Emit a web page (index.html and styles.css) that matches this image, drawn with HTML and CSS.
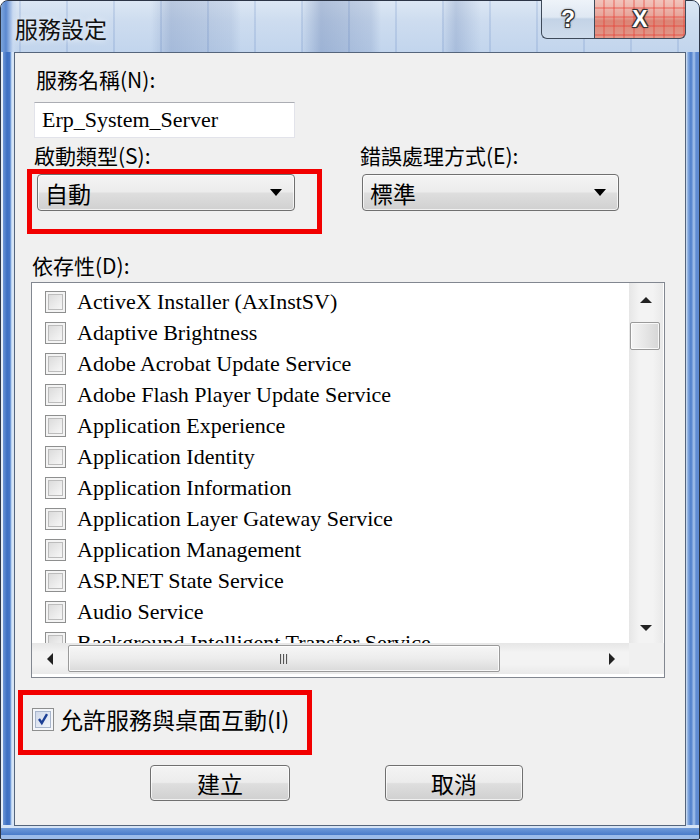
FILE: index.html
```html
<!DOCTYPE html>
<html lang="zh-Hant">
<head>
<meta charset="utf-8">
<title>服務設定</title>
<link rel="stylesheet" href="styles.css">
</head>
<body>
<div class="window">
  <div class="titlebar">
    <span class="title">服務設定</span>
    <div class="caption-btns">
      <div class="cbtn help">?</div>
      <div class="cbtn close">X</div>
    </div>
  </div>
  <div class="panel">
    <div class="label name-label">服務名稱(N):</div>
    <div class="textbox">Erp_System_Server</div>

    <div class="combos">
      <div class="col">
        <div class="label">啟動類型(S):</div>
        <div class="combo-wrap">
          <div class="combo start"><span class="combo-text">自動</span><span class="down"></span></div>
          <div class="mark mark-combo"></div>
        </div>
      </div>
      <div class="col">
        <div class="label">錯誤處理方式(E):</div>
        <div class="combo err"><span class="combo-text">標準</span><span class="down"></span></div>
      </div>
    </div>

    <div class="label dep-label">依存性(D):</div>
    <div class="listbox">
      <div class="list-main">
        <div class="viewport">
          <div class="row"><span class="chk"></span><span class="item">ActiveX Installer (AxInstSV)</span></div>
          <div class="row"><span class="chk"></span><span class="item">Adaptive Brightness</span></div>
          <div class="row"><span class="chk"></span><span class="item">Adobe Acrobat Update Service</span></div>
          <div class="row"><span class="chk"></span><span class="item">Adobe Flash Player Update Service</span></div>
          <div class="row"><span class="chk"></span><span class="item">Application Experience</span></div>
          <div class="row"><span class="chk"></span><span class="item">Application Identity</span></div>
          <div class="row"><span class="chk"></span><span class="item">Application Information</span></div>
          <div class="row"><span class="chk"></span><span class="item">Application Layer Gateway Service</span></div>
          <div class="row"><span class="chk"></span><span class="item">Application Management</span></div>
          <div class="row"><span class="chk"></span><span class="item">ASP.NET State Service</span></div>
          <div class="row"><span class="chk"></span><span class="item">Audio Service</span></div>
          <div class="row"><span class="chk"></span><span class="item">Background Intelligent Transfer Service</span></div>
        </div>
        <div class="vscroll">
          <div class="sbtn"><span class="tri up"></span></div>
          <div class="vtrack"><div class="vthumb"></div></div>
          <div class="sbtn"><span class="tri dn"></span></div>
        </div>
      </div>
      <div class="hscroll-row">
        <div class="hscroll">
          <div class="hbtn"><span class="tri lf"></span></div>
          <div class="htrack"><div class="hthumb"><span class="grip"></span></div></div>
          <div class="hbtn"><span class="tri rt"></span></div>
        </div>
        <div class="corner"></div>
      </div>
    </div>

    <div class="interact">
      <span class="chk checked">
        <svg viewBox="0 0 20 20" width="20" height="20"><path d="M5 10 L8.5 15 L15 4" fill="none" stroke="#1c3f95" stroke-width="3"/></svg>
      </span>
      <span class="interact-text">允許服務與桌面互動(I)</span>
      <div class="mark mark-interact"></div>
    </div>

    <div class="buttons">
      <div class="btn ok">建立</div>
      <div class="btn cancel">取消</div>
    </div>
  </div>
</div>
</body>
</html>
```
FILE: styles.css
```css
html, body {
  margin: 0;
  padding: 0;
  background: #ffffff;
}
body {
  width: 700px;
  height: 840px;
  overflow: hidden;
  font-family: "Noto Sans CJK TC", "Liberation Sans", sans-serif;
  color: #000;
}
.window {
  box-sizing: border-box;
  width: 700px;
  height: 840px;
  border: 1px solid #2c3546;
  border-radius: 8px 8px 2px 2px;
  padding: 0 13px 13px 13px;
  background:
    linear-gradient(180deg, rgba(0,0,0,0) calc(100% - 14px), #d6e4f6 calc(100% - 14px), #d6e4f6 calc(100% - 11px), #6f9ad8 calc(100% - 11px), #4a7cc9 calc(100% - 4px), #9cbce9 calc(100% - 4px)),
    linear-gradient(90deg, #e4edf8 0, #e4edf8 2px, #6d96d6 2px, #3c6fc3 6px, #4777c8 9px, #9bbde9 10px, #d7e5f6 11px, #d7e5f6 13px, rgba(0,0,0,0) 13px, rgba(0,0,0,0) calc(100% - 13px), #d9e6f6 calc(100% - 13px), #86abe0 calc(100% - 11px), #4d7dca calc(100% - 8px), #a7c4ec calc(100% - 5px), #5f8bd2 calc(100% - 3px), #5f8bd2 100%);
  display: flex;
  flex-direction: column;
}
.titlebar {
  height: 51px;
  margin: 0 -13px;
  padding: 0 13px;
  border-radius: 7px 7px 0 0;
  display: flex;
  align-items: flex-start;
  position: relative;
  background:
    linear-gradient(90deg, rgba(0,0,0,0) 150px, rgba(60,90,150,0.22) 170px, rgba(60,90,150,0.1) 230px, rgba(0,0,0,0) 240px, rgba(0,0,0,0) 300px, rgba(60,90,150,0.28) 320px, rgba(60,90,150,0.14) 370px, rgba(0,0,0,0) 380px, rgba(0,0,0,0) 440px, rgba(60,90,150,0.2) 455px, rgba(0,0,0,0) 480px),
    repeating-linear-gradient(90deg, rgba(70,110,180,0) 0 18px, rgba(70,110,180,0.16) 18px 20px, rgba(70,110,180,0) 20px 47px),
    linear-gradient(90deg, #7ea6dc 0, #5b88d0 5px, #c9daf1 12px, rgba(201,218,241,0) 16px),
    linear-gradient(180deg, #dce7f4 0%, #cddcef 40%, #c2d5ed 100%);
}
.title {
  font-size: 23px;
  line-height: 28px;
  margin-top: 13px;
  margin-left: 1px;
  color: #111;
  text-shadow: 0 0 6px rgba(255,255,255,0.9);
}
.caption-btns {
  position: absolute;
  right: 13px;
  top: -1px;
  display: flex;
}
.cbtn {
  box-sizing: border-box;
  height: 39px;
  border: 1px solid #3e4a5a;
  border-top: none;
  display: flex;
  align-items: center;
  justify-content: center;
  color: #fff;
  font-family: "Liberation Sans", sans-serif;
  font-weight: bold;
  font-size: 23px;
  text-shadow: -1px -1px 0 #333, 1px -1px 0 #333, -1px 1px 0 #333, 1px 1px 0 #333, 0 0 3px #000;
}
.help {
  width: 53px;
  border-radius: 0 0 0 6px;
  border-right: none;
  background: linear-gradient(180deg, #eef3f9 0%, #dfe8f3 45%, #c3d3e6 50%, #cfdcec 100%);
}
.close {
  width: 92px;
  border-radius: 0 0 6px 0;
  background:
    repeating-linear-gradient(90deg, rgba(255,255,255,0) 0 8px, rgba(230,60,50,0.35) 8px 10px),
    repeating-linear-gradient(180deg, rgba(255,255,255,0) 0 7px, rgba(230,60,50,0.35) 7px 9px),
    linear-gradient(180deg, #f2c4bc 0%, #e7a398 45%, #dc8374 55%, #e39a8c 100%);
}
.panel {
  box-sizing: border-box;
  flex: 1;
  border: 1px solid #55657c;
  background: #f0f0f0;
  position: relative;
  display: flex;
  flex-direction: column;
  align-items: flex-start;
}
.label {
  font-size: 21px;
  line-height: 26px;
  white-space: nowrap;
}
.name-label {
  margin: 13px 0 0 21px;
}
.textbox {
  box-sizing: border-box;
  margin: 10px 0 0 19px;
  width: 261px;
  height: 36px;
  background: #fff;
  border: 1px solid #e2e3ea;
  border-top-color: #abadb3;
  padding-left: 7px;
  font-family: "Liberation Serif", serif;
  font-size: 22px;
  line-height: 34px;
}
.combos {
  margin: 4px 0 0 19px;
  display: grid;
  grid-template-columns: 326px 300px;
}
.combo-wrap {
  position: relative;
}
.combo {
  box-sizing: border-box;
  margin-top: 6px;
  height: 37px;
  border: 1px solid #707070;
  border-radius: 4px;
  background: linear-gradient(180deg, #f4f4f4 0%, #ececec 48%, #dedede 52%, #d0d0d0 100%);
  box-shadow: inset 0 0 0 1px rgba(255,255,255,0.7);
  display: flex;
  align-items: center;
  justify-content: space-between;
  padding: 0 12px 0 7px;
}
.combo.start {
  margin-left: 3px;
  width: 258px;
}
.combo.err {
  margin-left: 2px;
  width: 257px;
}
.combo-text {
  font-size: 23px;
  line-height: 30px;
}
.down {
  width: 0;
  height: 0;
  border-left: 6px solid transparent;
  border-right: 6px solid transparent;
  border-top: 7px solid #000;
}
.mark {
  position: absolute;
  border: 5px solid #f20000;
}
.mark-combo {
  left: -7px;
  top: -5px;
  width: 285px;
  height: 55px;
}
.dep-label {
  margin: 41px 0 0 17px;
}
.listbox {
  box-sizing: border-box;
  margin: 4px 0 0 16px;
  width: 634px;
  height: 396px;
  border: 1px solid #828790;
  background: #fff;
  padding-bottom: 3px;
  display: flex;
  flex-direction: column;
}
.list-main {
  display: flex;
  height: 360px;
}
.viewport {
  width: 597px;
  height: 360px;
  overflow: hidden;
  padding-top: 3px;
  box-sizing: border-box;
}
.row {
  height: 31px;
  display: flex;
  align-items: center;
  padding-left: 13px;
}
.chk {
  box-sizing: border-box;
  width: 21px;
  height: 22px;
  flex: none;
  border: 1px solid #8e8f8f;
  background: linear-gradient(135deg, #d6d6d6 0%, #f1f1f1 70%, #fbfbfb 100%);
  box-shadow: inset 0 0 0 2px #f4f4f4, inset 0 0 0 3px #bcbcbc;
}
.item {
  margin-left: 11px;
  font-family: "Liberation Serif", serif;
  font-size: 22px;
  line-height: 28px;
  white-space: nowrap;
}
.vscroll {
  width: 34px;
  height: 360px;
  display: flex;
  flex-direction: column;
  background: linear-gradient(90deg, #e6e6e6 0%, #f3f3f3 30%, #f3f3f3 70%, #e9e9e9 100%);
}
.sbtn {
  height: 30px;
  display: flex;
  align-items: center;
  justify-content: center;
}
.vtrack {
  flex: 1;
  padding: 9px 3px 0 1px;
}
.vthumb {
  box-sizing: border-box;
  height: 28px;
  border: 1px solid #9a9a9a;
  border-radius: 2px;
  background: linear-gradient(90deg, #f4f4f4 0%, #e6e6e6 50%, #d6d6d6 100%);
  box-shadow: inset 0 0 0 1px rgba(255,255,255,0.8);
}
.tri {
  width: 0;
  height: 0;
}
.tri.up {
  border-left: 6px solid transparent;
  border-right: 6px solid transparent;
  border-bottom: 6px solid #222;
  margin-top: 4px;
}
.tri.dn {
  border-left: 6px solid transparent;
  border-right: 6px solid transparent;
  border-top: 6px solid #222;
}
.tri.lf {
  border-top: 6px solid transparent;
  border-bottom: 6px solid transparent;
  border-right: 6px solid #222;
}
.tri.rt {
  border-top: 6px solid transparent;
  border-bottom: 6px solid transparent;
  border-left: 6px solid #222;
}
.hscroll-row {
  display: flex;
  height: 31px;
}
.hscroll {
  width: 597px;
  display: flex;
  background: linear-gradient(180deg, #e6e6e6 0%, #f3f3f3 30%, #f3f3f3 70%, #e9e9e9 100%);
}
.hbtn {
  width: 35px;
  display: flex;
  align-items: center;
  justify-content: center;
}
.htrack {
  flex: 1;
  padding: 2px 0 2px 1px;
}
.hthumb {
  box-sizing: border-box;
  width: 432px;
  height: 27px;
  border: 1px solid #9a9a9a;
  border-radius: 2px;
  background: linear-gradient(180deg, #f6f6f6 0%, #ececec 50%, #dadada 100%);
  box-shadow: inset 0 0 0 1px rgba(255,255,255,0.8);
  display: flex;
  align-items: center;
  justify-content: center;
}
.grip {
  width: 9px;
  height: 10px;
  background: repeating-linear-gradient(90deg, #555 0 1px, #ddd 1px 2px, transparent 2px 3px);
}
.corner {
  flex: 1;
  background: #f0f0f0;
}
.interact {
  position: relative;
  margin: 29px 0 0 17px;
  display: flex;
  align-items: center;
  height: 24px;
}
.chk.checked {
  width: 22px;
  height: 23px;
  background: linear-gradient(135deg, #c9d3e6 0%, #eef2f9 80%);
  box-shadow: inset 0 0 0 2px #f4f6fa, inset 0 0 0 3px #a9b6cc;
  display: flex;
  align-items: center;
  justify-content: center;
}
.chk.checked svg {
  width: 16px;
  height: 16px;
}
.interact-text {
  margin-left: 6px;
  font-size: 23px;
  line-height: 28px;
  white-space: nowrap;
}
.mark-interact {
  left: -14px;
  top: -17px;
  width: 284px;
  height: 55px;
}
.buttons {
  margin: 34px 0 0 135px;
  display: flex;
  gap: 95px;
}
.btn {
  box-sizing: border-box;
  height: 36px;
  border: 1px solid #707070;
  border-radius: 4px;
  background: linear-gradient(180deg, #f4f4f4 0%, #ececec 48%, #dedede 52%, #d0d0d0 100%);
  box-shadow: inset 0 0 0 1px rgba(255,255,255,0.7);
  display: flex;
  align-items: center;
  justify-content: center;
  font-size: 23px;
  line-height: 30px;
}
.btn.ok {
  width: 140px;
}
.btn.cancel {
  width: 138px;
}
```
